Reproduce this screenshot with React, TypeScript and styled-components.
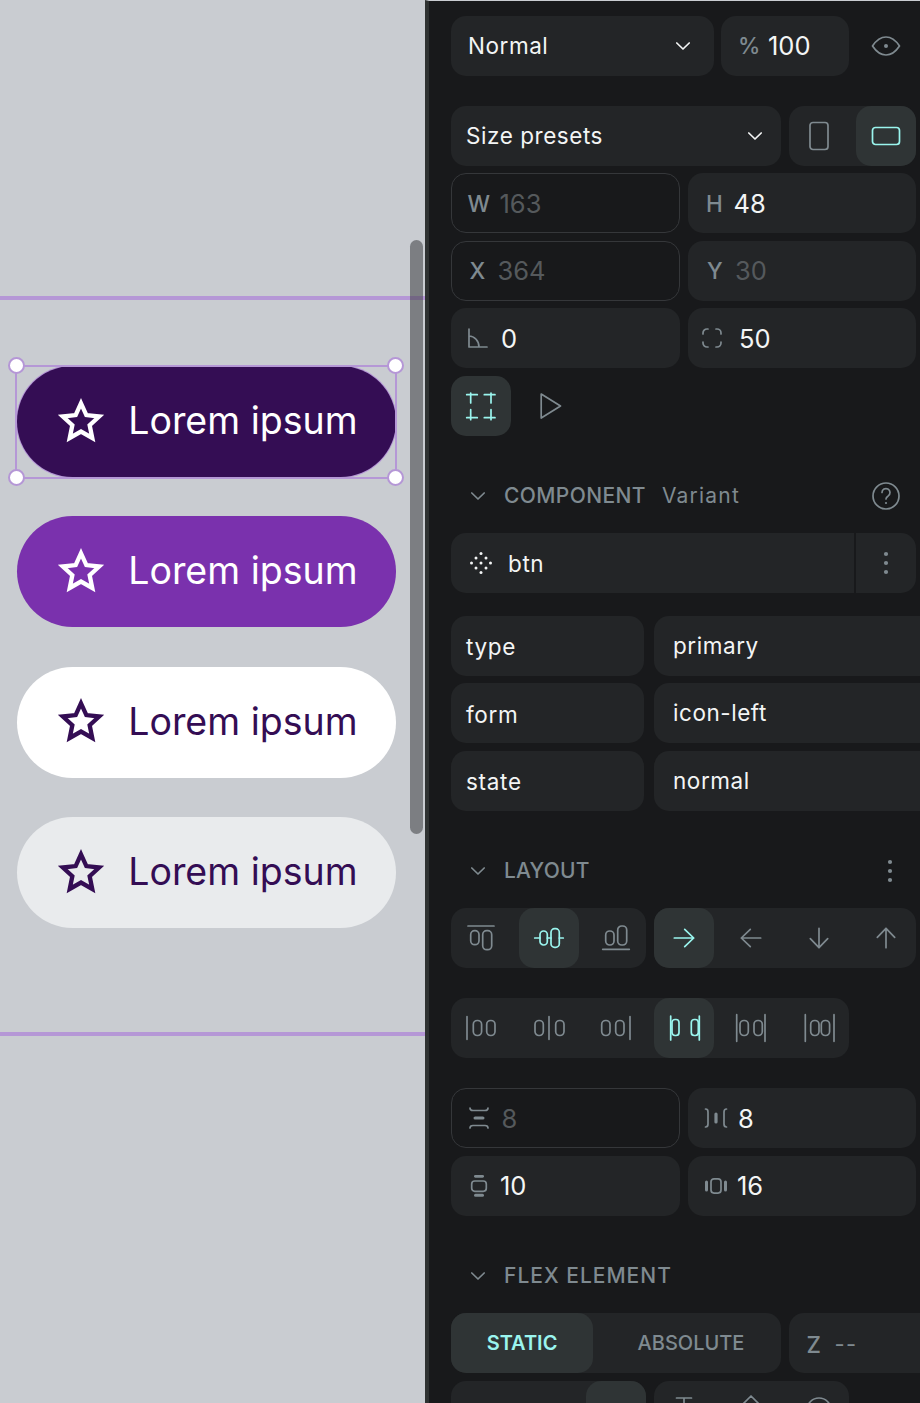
import React from "react"
import styled, { createGlobalStyle } from "styled-components"

const FIELD = "#232527"
const ACTIVE = "#2f3435"
const ACCENT = "#9af5ee"
const MUTED = "#7f8a90"
const TEXT = "#f3f5f5"
const LINE = "#b597d6"

const GlobalStyle = createGlobalStyle`
	html, body {
		margin: 0;
		padding: 0;
		width: 920px;
		height: 1403px;
		overflow: hidden;
		background: #18191b;
		font-family: Inter, "Liberation Sans", sans-serif;
	}
`

const Page = styled.div`
	display: flex;
	width: 920px;
	height: 1403px;
	overflow: hidden;
`

/* canvas */

const Canvas = styled.div`
	position: relative;
	flex: 0 0 425px;
	padding-top: 296px;
	box-sizing: border-box;
	background: #c9ccd1;
`

const Frame = styled.div`
	display: flex;
	flex-direction: column;
	gap: 39.3px;
	padding: 66.2px 0 104.2px 16.7px;
	border-top: 4px solid ${LINE};
	border-bottom: 4px solid ${LINE};
`

const Scrollbar = styled.div`
	position: absolute;
	left: 410px;
	top: 240px;
	width: 13px;
	height: 594px;
	border-radius: 7px;
	background: rgba(60, 62, 66, 0.55);
`

const LoremButton = styled.div<{ $bg: string; $fg: string }>`
	display: flex;
	align-items: center;
	gap: 23px;
	box-sizing: border-box;
	width: 379px;
	height: 111px;
	padding-left: 40.5px;
	border-radius: 56px;
	background: ${({ $bg }) => $bg};
	color: ${({ $fg }) => $fg};
	font-family: Inter, sans-serif;
	font-size: 37.5px;
	font-weight: 400;
	line-height: 1;
`

const LoremLabel = styled.span`
	position: relative;
	top: -1px;
`

const Selected = styled.div`
	position: relative;
	width: 379px;

	${LoremButton} {
		box-shadow: 0 0 0 1px ${LINE};
	}
`

const SelectionBox = styled.div`
	position: absolute;
	inset: -1.5px -1px -1.5px -1.5px;
	border: 2px solid ${LINE};
`

const Handle = styled.div<{ $v: "top" | "bottom"; $h: "left" | "right" }>`
	position: absolute;
	${({ $v }) => $v}: -9.5px;
	${({ $h }) => $h}: -9.5px;
	box-sizing: border-box;
	width: 17px;
	height: 17px;
	border-radius: 50%;
	background: #fff;
	border: 2px solid ${LINE};
`

/* panel */

const Panel = styled.div`
	flex: 1;
	display: flex;
	flex-direction: column;
	gap: 7.5px;
	box-sizing: border-box;
	padding: 14.8px 0 0 22px;
	border-top: 1px solid #c9ccd1;
	border-left: 4px solid #2e3131;
	background: #18191b;
	overflow: hidden;
	color: ${TEXT};
`

const Row = styled.div<{ $gapTop?: boolean }>`
	display: grid;
	grid-template-columns: repeat(7, 60px);
	grid-auto-rows: 60px;
	column-gap: 7.5px;
	margin-top: ${({ $gapTop }) => ($gapTop ? "22.5px" : "0")};
	flex: none;
`

const Half = styled.div<{ $gapTop?: boolean }>`
	display: grid;
	grid-template-columns: 229px 228px;
	column-gap: 8px;
	width: 465px;
	height: 60px;
	margin-top: ${({ $gapTop }) => ($gapTop ? "22.5px" : "0")};
	flex: none;
`

const Select = styled.div<{ $span: number; $pad: number; $end: number }>`
	grid-column: span ${({ $span }) => $span};
	display: flex;
	align-items: center;
	justify-content: space-between;
	padding: 0 ${({ $end }) => $end}px 1px ${({ $pad }) => $pad}px;
	border-radius: 15px;
	background: ${FIELD};
	font-size: 22.5px;
	font-weight: 400;
	letter-spacing: 0.55px;

	svg {
		margin-top: 1px;
	}
`

const Field = styled.div<{ $outlined?: boolean; $span?: number }>`
	${({ $span }) => ($span ? `grid-column: span ${$span};` : "")}
	display: flex;
	align-items: center;
	box-sizing: border-box;
	padding-left: ${({ $outlined }) => ($outlined ? "15.5px" : "17px")};
	border-radius: 15px;
	background: ${({ $outlined }) => ($outlined ? "transparent" : FIELD)};
	border: ${({ $outlined }) => ($outlined ? "1.5px solid #35373a" : "none")};
	min-width: 0;
`

const Label = styled.span<{ $w: number; $ml?: number }>`
	flex: 0 0 ${({ $w }) => $w}px;
	width: ${({ $w }) => $w}px;
	margin-left: ${({ $ml }) => $ml ?? 0}px;
	display: flex;
	align-items: center;
	color: ${MUTED};
	font-size: 22.5px;
	font-weight: 500;
`

const Value = styled.span<{ $dim?: boolean }>`
	color: ${({ $dim }) => ($dim ? "#55595c" : TEXT)};
	font-size: 25.5px;
	font-weight: 400;
`

const Cell = styled.div<{ $active?: boolean }>`
	display: flex;
	align-items: center;
	justify-content: center;
	width: 60px;
	height: 60px;
	border-radius: 15px;
	background: ${({ $active }) => ($active ? ACTIVE : "transparent")};
	color: ${({ $active }) => ($active ? ACCENT : MUTED)};
`

const Group = styled.div<{ $span: number }>`
	grid-column: span ${({ $span }) => $span};
	display: grid;
	grid-template-columns: repeat(${({ $span }) => $span}, 60px);
	column-gap: 7.5px;
	border-radius: 15px;
	background: ${FIELD};
`

const Heading = styled.div`
	grid-column: span 7;
	display: flex;
	align-items: center;
	gap: 11px;
	padding-left: 12px;
	color: ${MUTED};
	font-size: 21px;
	font-weight: 550;
`

const HeadingTitle = styled.span<{ $track: number }>`
	letter-spacing: ${({ $track }) => $track}px;
`

const HeadingNote = styled.span`
	margin-left: 5px;
	font-weight: 400;
	letter-spacing: 1.2px;
`

const HeadingEnd = styled.span<{ $right: number }>`
	margin-left: auto;
	margin-right: ${({ $right }) => $right}px;
	display: flex;
`

const ComponentBar = styled.div`
	grid-column: span 7;
	display: flex;
	align-items: center;
	border-radius: 15px;
	background: ${FIELD};
	font-size: 22.5px;
	letter-spacing: 0.6px;
`

const ComponentName = styled.div`
	flex: 1;
	display: flex;
	align-items: center;
	gap: 12px;
	height: 100%;
	padding-left: 15px;
	border-right: 2px solid #18191b;
`

const ComponentMenu = styled.div`
	flex: 0 0 60px;
	display: flex;
	align-items: center;
	justify-content: center;
	color: ${MUTED};
`

const VariantRow = styled.div<{ $first?: boolean }>`
	display: flex;
	gap: 10px;
	height: 60px;
	margin-top: ${({ $first }) => ($first ? "15px" : "0")};
	flex: none;
`

const VariantName = styled.div`
	flex: 0 0 193px;
	box-sizing: border-box;
	display: flex;
	align-items: center;
	padding: 2px 0 0 15px;
	border-radius: 15px;
	background: ${FIELD};
	font-size: 22.5px;
	letter-spacing: 0.7px;
`

const VariantValue = styled.div`
	flex: 0 0 300px;
	box-sizing: border-box;
	display: flex;
	align-items: center;
	padding: 0 0 1px 19px;
	border-radius: 15px;
	background: ${FIELD};
	font-size: 22.5px;
	letter-spacing: 0.55px;
`

const Segmented = styled.div`
	grid-column: span 5;
	display: flex;
	border-radius: 15px;
	background: ${FIELD};
`

const Segment = styled.div<{ $active?: boolean; $w: number }>`
	flex: 0 0 ${({ $w }) => $w}px;
	display: flex;
	align-items: center;
	justify-content: center;
	border-radius: 15px;
	background: ${({ $active }) => ($active ? ACTIVE : "transparent")};
	color: ${({ $active }) => ($active ? ACCENT : MUTED)};
	font-size: 20px;
	font-weight: ${({ $active }) => ($active ? 600 : 500)};
`

const ZField = styled(Field)`
	grid-column: span 2;
	width: 200px;
	padding: 2px 0 0 18px;
`

const ZValue = styled.span`
	color: ${MUTED};
	font-size: 22px;
	letter-spacing: 1.5px;
`

/* icons, all drawn on a 30 x 30 box */

const Svg = styled.svg`
	display: block;
	flex: none;
	width: 30px;
	height: 30px;
	overflow: visible;
	fill: none;
	stroke: currentColor;
	stroke-width: 1.7;
	stroke-linecap: round;
	stroke-linejoin: round;
`

const Solid = styled.g`
	fill: currentColor;
	stroke: none;
`

const I = ({ children }: { children: React.ReactNode }) => <Svg viewBox="0 0 30 30">{children}</Svg>

const Chevron = () => (
	<I>
		<path d="M8.8 12 L15 18 L21.2 12" />
	</I>
)
const Dots = () => (
	<I>
		<Solid>
			<circle cx="15" cy="6" r="2.1" />
			<circle cx="15" cy="15" r="2.1" />
			<circle cx="15" cy="24" r="2.1" />
		</Solid>
	</I>
)
const Eye = () => (
	<I>
		<path d="M1.5 15 C5.5 9 10 6 15 6 S24.5 9 28.5 15 C24.5 21 20 24 15 24 S5.5 21 1.5 15 Z" />
		<Solid>
			<circle cx="15" cy="15" r="2" />
		</Solid>
	</I>
)
const Help = () => (
	<I>
		<circle cx="15" cy="15" r="13" />
		<path d="M11 11.5 a4 4 0 1 1 6.2 3.4 c-1.5 .9-2.2 1.6-2.2 3.1" />
		<Solid>
			<circle cx="15" cy="22" r="1.1" />
		</Solid>
	</I>
)
const Portrait = () => (
	<I>
		<rect x="6" y="1.5" width="18" height="27" rx="3" />
	</I>
)
const Landscape = () => (
	<I>
		<rect x="1.5" y="6.5" width="27" height="17" rx="3" />
	</I>
)
const AngleIcon = () => (
	<I>
		<path d="M6 6 V24 H24 M6 13 C11.5 13 16 18 16 24" />
	</I>
)
const RadiusIcon = () => (
	<I>
		<path d="M6 11 V10 a4 4 0 0 1 4-4 h1 M19 6 h1 a4 4 0 0 1 4 4 v1 M24 19 v1 a4 4 0 0 1-4 4 h-1 M11 24 h-1 a4 4 0 0 1-4-4 v-1" />
	</I>
)
const FocusIcon = () => (
	<I>
		<path d="M.7 3.7 H11.3 M4.7 2 V12 M18.3 3.7 H29 M25 2 V12 M.7 26.7 H11.3 M4.7 18.7 V28.7 M18.3 26.7 H29 M25 18.7 V28.7" />
	</I>
)
const PlayIcon = () => (
	<I>
		<path d="M7.2 3 L26.5 15 L7.2 27 Z" />
	</I>
)
const NodeDots = () => (
	<I>
		<Solid>
			{[
				[15, 5.5],
				[10, 10],
				[20, 10],
				[5.5, 15],
				[15, 15],
				[24.5, 15],
				[10, 20],
				[20, 20],
				[15, 24.5],
			].map(([cx, cy]) => (
				<circle cx={cx} cy={cy} key={`${cx}-${cy}`} r="1.5" />
			))}
		</Solid>
	</I>
)

const Pair = ({ a, b }: { a: number; b: number }) => (
	<>
		<rect height="15" rx="4" width="8.3" x={a} y="7.5" />
		<rect height="15" rx="4" width="8.3" x={b} y="7.5" />
	</>
)

const AlignTop = () => (
	<I>
		<path d="M2 3 H28" />
		<rect height="14" rx="4" width="8.3" x="4.7" y="7.7" />
		<rect height="19" rx="4" width="9" x="16.7" y="7.7" />
	</I>
)
const AlignMiddle = () => (
	<I>
		<path d="M.7 15 H6 M13.3 15 H17 M25.3 15 H29.3" />
		<rect height="14" rx="3.6" width="7.3" x="6" y="8" />
		<rect height="18.6" rx="3.6" width="8.3" x="17" y="5.7" />
	</I>
)
const AlignBottom = () => (
	<I>
		<path d="M1.7 26.3 H28.3" />
		<rect height="14" rx="4" width="8.3" x="4.7" y="8" />
		<rect height="19" rx="4" width="9" x="16.7" y="3" />
	</I>
)
const ArrowRight = () => (
	<I>
		<path d="M5.3 15 H24.7 M15.7 6.3 L24.7 15 L15.7 23.7" />
	</I>
)
const ArrowLeft = () => (
	<I>
		<path d="M24.7 15 H5.3 M14.3 6.3 L5.3 15 L14.3 23.7" />
	</I>
)
const ArrowDown = () => (
	<I>
		<path d="M15 5.3 V24.7 M6.3 15.7 L15 24.7 L23.7 15.7" />
	</I>
)
const ArrowUp = () => (
	<I>
		<path d="M15 24.7 V5.3 M6.3 14.3 L15 5.3 L23.7 14.3" />
	</I>
)
const JustifyStart = () => (
	<I>
		<path d="M1 3.7 V26.3" />
		<Pair a={7.3} b={20.7} />
	</I>
)
const JustifyCenter = () => (
	<I>
		<path d="M15 3.7 V26.3" />
		<Pair a={1} b={21.7} />
	</I>
)
const JustifyEnd = () => (
	<I>
		<path d="M29 3.7 V26.3" />
		<Pair a={.7} b={14.7} />
	</I>
)
const JustifyBetween = () => (
	<I>
		<path d="M1.7 3 V27 M30.3 3 V27" />
		<rect height="16" rx="3" width="7" x="3" y="6.5" />
		<rect height="16" rx="3" width="7" x="22.3" y="6.5" />
	</I>
)
const JustifyAround = () => (
	<I>
		<path d="M.7 1.7 V28.3 M29 1.7 V28.3" />
		<Pair a={4} b={18} />
	</I>
)
const JustifyEvenly = () => (
	<I>
		<path d="M1.3 1.7 V28.3 M30 1.7 V28.3" />
		<Pair a={6.7} b={17.3} />
	</I>
)
const RowGapIcon = () => (
	<I>
		<path d="M6 5 C6 7 7 7.5 9 7.5 H21 C23 7.5 24 7 24 5 M6 25 C6 23 7 22.5 9 22.5 H21 C23 22.5 24 23 24 25" />
		<Solid>
			<rect height="3.2" rx="1.6" width="11" x="9.5" y="13.4" />
		</Solid>
	</I>
)
const ColGapIcon = () => (
	<I>
		<path d="M4.5 6 C6.5 6 7 7 7 9 V21 C7 23 6.5 24 4.5 24 M25.5 6 C23.5 6 23 7 23 9 V21 C23 23 23.5 24 25.5 24" />
		<Solid>
			<rect height="11" rx="1.6" width="3.2" x="13.4" y="9.5" />
		</Solid>
	</I>
)
const RowPadIcon = () => (
	<I>
		<rect height="10.3" rx="3" width="14.6" x="7.7" y="10" />
		<Solid>
			<rect height="2.7" rx="1.35" width="10" x="10" y="4" />
			<rect height="3" rx="1.5" width="10" x="10" y="22.7" />
		</Solid>
	</I>
)
const ColPadIcon = () => (
	<I>
		<rect height="14.3" rx="3" width="10" x="10" y="7.8" />
		<Solid>
			<rect height="11" rx="1.5" width="3" x="4" y="9.5" />
			<rect height="11" rx="1.5" width="3" x="23" y="9.5" />
		</Solid>
	</I>
)
const StretchIcon = () => (
	<I>
		<path d="M6 27 L9.5 24 L13 27 M17 27 L20.5 24 L24 27" />
	</I>
)
const PillIcon = () => (
	<I>
		<rect height="12" rx="3" width="17" x="6.5" y="21" />
	</I>
)
const TextIcon = () => (
	<I>
		<path d="M7.5 2 H22.5 M15 2 V28" />
	</I>
)
const DiamondIcon = () => (
	<I>
		<path d="M15 0 L27 12 L15 24 L3 12 Z" />
	</I>
)
const CircleIcon = () => (
	<I>
		<circle cx="15" cy="14" r="12" />
	</I>
)

const Star = ({ color }: { color: string }) => (
	<svg fill="none" height="48" viewBox="0.8 2.2 46.4 46.4" width="48">
		<path
			d="M24 7.3 L29.17 18.68 L41.6 20.08 L32.37 28.52 L34.87 40.77 L24 34.6 L13.13 40.77 L15.63 28.52 L6.4 20.08 L18.83 18.68 Z"
			stroke={color}
			strokeLinejoin="miter"
			strokeMiterlimit="10"
			strokeWidth="4.2"
		/>
	</svg>
)

const DARK = "#340d54"

const buttons = [
	{ bg: "#7a31ad", fg: "#ffffff" },
	{ bg: "#ffffff", fg: DARK },
	{ bg: "#e9ebed", fg: DARK },
]

const variants = [
	{ name: "type", value: "primary" },
	{ name: "form", value: "icon-left" },
	{ name: "state", value: "normal" },
]

const DIR_ICONS = [
	[<ArrowRight key="r" />, true],
	[<ArrowLeft key="l" />, false],
	[<ArrowDown key="d" />, false],
	[<ArrowUp key="u" />, false],
] as const

const JUSTIFY_ICONS = [
	[<JustifyStart key="a" />, false],
	[<JustifyCenter key="b" />, false],
	[<JustifyEnd key="c" />, false],
	[<JustifyBetween key="d" />, true],
	[<JustifyAround key="e" />, false],
	[<JustifyEvenly key="f" />, false],
] as const

export default function App() {
	return (
		<>
			<GlobalStyle />
			<Page>
				<Canvas>
					<Frame>
						<Selected>
							<LoremButton $bg={DARK} $fg="#ffffff">
								<Star color="#ffffff" />
								<LoremLabel>Lorem ipsum</LoremLabel>
							</LoremButton>
							<SelectionBox>
								<Handle $h="left" $v="top" />
								<Handle $h="right" $v="top" />
								<Handle $h="left" $v="bottom" />
								<Handle $h="right" $v="bottom" />
							</SelectionBox>
						</Selected>
						{buttons.map((b) => (
							<LoremButton $bg={b.bg} $fg={b.fg} key={b.bg}>
								<Star color={b.fg} />
								<LoremLabel>Lorem ipsum</LoremLabel>
							</LoremButton>
						))}
					</Frame>
					<Scrollbar />
				</Canvas>

				<Panel>
					<Row>
						<Select $end={16} $pad={17} $span={4}>
							Normal
							<Chevron />
						</Select>
						<Field $span={2}>
							<Label $w={30}>%</Label>
							<Value>100</Value>
						</Field>
						<Cell>
							<Eye />
						</Cell>
					</Row>

					<Row $gapTop>
						<Select $end={11} $pad={15} $span={5}>
							Size presets
							<Chevron />
						</Select>
						<Group $span={2}>
							<Cell>
								<Portrait />
							</Cell>
							<Cell $active>
								<Landscape />
							</Cell>
						</Group>
					</Row>

					<Half>
						<Field $outlined>
							<Label $w={32}>W</Label>
							<Value $dim>163</Value>
						</Field>
						<Field>
							<Label $ml={1} $w={27.5}>
								H
							</Label>
							<Value>48</Value>
						</Field>
					</Half>
					<Half>
						<Field $outlined>
							<Label $ml={2} $w={28}>
								X
							</Label>
							<Value $dim>364</Value>
						</Field>
						<Field>
							<Label $ml={2} $w={28}>
								Y
							</Label>
							<Value $dim>30</Value>
						</Field>
					</Half>
					<Half>
						<Field>
							<Label $ml={-5} $w={38}>
								<AngleIcon />
							</Label>
							<Value>0</Value>
						</Field>
						<Field>
							<Label $ml={-8} $w={42}>
								<RadiusIcon />
							</Label>
							<Value>50</Value>
						</Field>
					</Half>
					<Row>
						<Cell $active>
							<FocusIcon />
						</Cell>
						<Cell>
							<PlayIcon />
						</Cell>
					</Row>

					<Row $gapTop>
						<Heading>
							<Chevron />
							<HeadingTitle $track={0.4}>COMPONENT</HeadingTitle>
							<HeadingNote>Variant</HeadingNote>
							<HeadingEnd $right={15}>
								<Help />
							</HeadingEnd>
						</Heading>
					</Row>
					<Row>
						<ComponentBar>
							<ComponentName>
								<NodeDots />
								btn
							</ComponentName>
							<ComponentMenu>
								<Dots />
							</ComponentMenu>
						</ComponentBar>
					</Row>

					{variants.map((v, i) => (
						<VariantRow $first={i === 0} key={v.name}>
							<VariantName>{v.name}</VariantName>
							<VariantValue>{v.value}</VariantValue>
						</VariantRow>
					))}

					<Row $gapTop>
						<Heading>
							<Chevron />
							<HeadingTitle $track={0.2}>LAYOUT</HeadingTitle>
							<HeadingEnd $right={11}>
								<Dots />
							</HeadingEnd>
						</Heading>
					</Row>
					<Row>
						<Group $span={3}>
							<Cell>
								<AlignTop />
							</Cell>
							<Cell $active>
								<AlignMiddle />
							</Cell>
							<Cell>
								<AlignBottom />
							</Cell>
						</Group>
						<Group $span={4}>
							{DIR_ICONS.map(([icon, active], i) => (
								<Cell $active={active} key={i}>
									{icon}
								</Cell>
							))}
						</Group>
					</Row>
					<Row $gapTop>
						<Group $span={6}>
							{JUSTIFY_ICONS.map(([icon, active], i) => (
								<Cell $active={active} key={i}>
									{icon}
								</Cell>
							))}
						</Group>
					</Row>

					<Half $gapTop>
						<Field $outlined>
							<Label $ml={-4} $w={38}>
								<RowGapIcon />
							</Label>
							<Value $dim>8</Value>
						</Field>
						<Field>
							<Label $ml={-4} $w={37}>
								<ColGapIcon />
							</Label>
							<Value>8</Value>
						</Field>
					</Half>
					<Half>
						<Field>
							<Label $ml={-4} $w={36}>
								<RowPadIcon />
							</Label>
							<Value>10</Value>
						</Field>
						<Field>
							<Label $ml={-4} $w={36}>
								<ColPadIcon />
							</Label>
							<Value>16</Value>
						</Field>
					</Half>

					<Row $gapTop>
						<Heading>
							<Chevron />
							<HeadingTitle $track={1}>FLEX ELEMENT</HeadingTitle>
						</Heading>
					</Row>
					<Row>
						<Segmented>
							<Segment $active $w={142}>
								STATIC
							</Segment>
							<Segment $w={196}>ABSOLUTE</Segment>
						</Segmented>
						<ZField>
							<Label $w={28}>Z</Label>
							<ZValue>--</ZValue>
						</ZField>
					</Row>
					<Row>
						<Group $span={3}>
							<Cell />
							<Cell>
								<StretchIcon />
							</Cell>
							<Cell $active>
								<PillIcon />
							</Cell>
						</Group>
						<Group $span={3}>
							<Cell>
								<TextIcon />
							</Cell>
							<Cell>
								<DiamondIcon />
							</Cell>
							<Cell>
								<CircleIcon />
							</Cell>
						</Group>
					</Row>
				</Panel>
			</Page>
		</>
	)
}
